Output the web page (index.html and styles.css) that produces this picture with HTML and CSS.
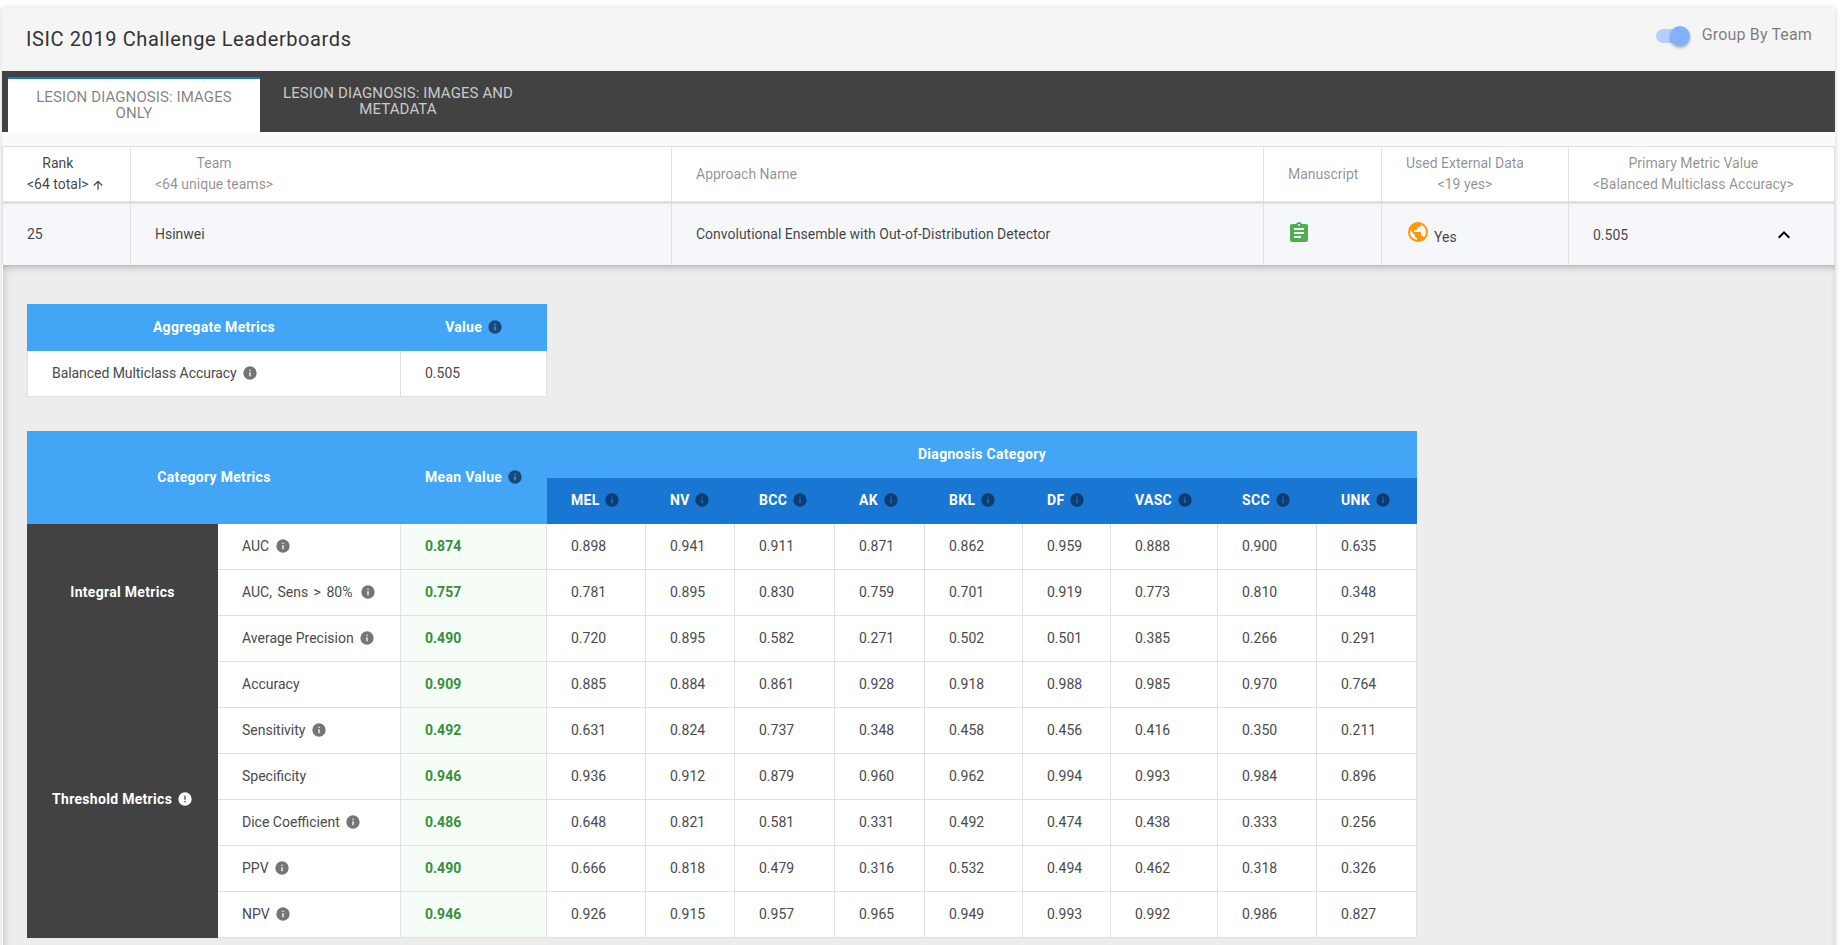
FILE: index.html
```html
<!DOCTYPE html>
<html lang="en">
<head>
<meta charset="utf-8">
<title>ISIC 2019 Challenge Leaderboards</title>
<link rel="stylesheet" href="styles.css">
</head>
<body>
<svg class="defs" aria-hidden="true">
  <symbol id="i-info" viewBox="0 0 24 24"><path d="M13,9H11V7H13M13,17H11V11H13M12,2A10,10 0 0,0 2,12A10,10 0 0,0 12,22A10,10 0 0,0 22,12A10,10 0 0,0 12,2Z"/></symbol>
  <symbol id="i-alert" viewBox="0 0 24 24"><path d="M13,13H11V7H13M13,17H11V15H13M12,2A10,10 0 0,0 2,12A10,10 0 0,0 12,22A10,10 0 0,0 22,12A10,10 0 0,0 12,2Z"/></symbol>
  <symbol id="i-clip" viewBox="0 0 24 24"><path d="M17,9H7V7H17M17,13H7V11H17M14,17H7V15H14M12,3A1,1 0 0,1 13,4A1,1 0 0,1 12,5A1,1 0 0,1 11,4A1,1 0 0,1 12,3M19,3H14.82C14.4,1.84 13.3,1 12,1C10.7,1 9.6,1.84 9.18,3H5A2,2 0 0,0 3,5V19A2,2 0 0,0 5,21H19A2,2 0 0,0 21,19V5A2,2 0 0,0 19,3Z"/></symbol>
  <symbol id="i-earth" viewBox="0 0 24 24"><path d="M17.9,17.39C17.64,16.59 16.89,16 16,16H15V13A1,1 0 0,0 14,12H8V10H10A1,1 0 0,0 11,9V7H13A2,2 0 0,0 15,5V4.59C17.93,5.77 20,8.64 20,12C20,14.08 19.2,15.97 17.9,17.39M11,19.93C7.05,19.44 4,16.08 4,12C4,11.38 4.08,10.78 4.21,10.19L9,15V16A2,2 0 0,0 11,18M12,2A10,10 0 0,0 2,12A10,10 0 0,0 12,22A10,10 0 0,0 22,12A10,10 0 0,0 12,2Z"/></symbol>
  <symbol id="i-chev" viewBox="0 0 24 24"><path d="M7.41,15.41L12,10.83L16.59,15.41L18,14L12,8L6,14L7.41,15.41Z"/></symbol>
  <symbol id="i-up" viewBox="0 0 24 24"><path d="M13,20H11V8L5.5,13.5L4.08,12.08L12,4.16L19.92,12.08L18.5,13.5L13,8V20Z"/></symbol>
</svg>
<main class="card">
  <header class="titlebar">
    <h1 class="title">ISIC 2019 Challenge Leaderboards</h1>
    <div class="group-toggle">
      <span class="switch"><span class="switch-thumb"></span></span>
      <span class="switch-label">Group By Team</span>
    </div>
  </header>
  <nav class="tabs">
    <div class="tab tab-active">Lesion Diagnosis: Images Only</div>
    <div class="tab tab-other">Lesion Diagnosis: Images and Metadata</div>
  </nav>
  <section class="board">
    <table class="lead">
      <colgroup><col class="l1"><col class="l2"><col class="l3"><col class="l4"><col class="l5"><col class="l6"></colgroup>
      <thead>
        <tr>
          <th><span class="hblock dark">Rank<br>&lt;64 total&gt;<svg class="i-arrow"><use href="#i-up"/></svg></span></th>
          <th><span class="hblock">Team<br>&lt;64 unique teams&gt;</span></th>
          <th><span class="hblock">Approach Name</span></th>
          <th><span class="hblock">Manuscript</span></th>
          <th><span class="hblock">Used External Data<br>&lt;19 yes&gt;</span></th>
          <th><span class="hblock">Primary Metric Value<br>&lt;Balanced Multiclass Accuracy&gt;</span></th>
        </tr>
      </thead>
      <tbody>
        <tr>
          <td class="t">25</td>
          <td class="t">Hsinwei</td>
          <td class="t">Convolutional Ensemble with Out-of-Distribution Detector</td>
          <td><svg class="i-manu"><use href="#i-clip"/></svg></td>
          <td><span class="ext"><svg class="i-globe"><use href="#i-earth"/></svg><span class="ext-text">Yes</span></span></td>
          <td><span class="primary"><span>0.505</span><svg class="i-chevron"><use href="#i-chev"/></svg></span></td>
        </tr>
      </tbody>
    </table>
    <div class="details">
      <table class="metrics aggregate">
        <colgroup><col class="c-name"><col class="c-mean"></colgroup>
        <thead>
          <tr class="h47">
            <th>Aggregate Metrics</th>
            <th>Value <svg class="i-s dk"><use href="#i-info"/></svg></th>
          </tr>
        </thead>
        <tbody>
          <tr>
            <td class="tight">Balanced Multiclass Accuracy <svg class="i-s gr"><use href="#i-info"/></svg></td>
            <td>0.505</td>
          </tr>
        </tbody>
      </table>
      <table class="metrics category">
        <colgroup>
          <col class="c-group"><col class="c-metric"><col class="c-mean">
          <col class="c-mel"><col class="c-nv"><col class="c-bcc"><col class="c-ak"><col class="c-bkl"><col class="c-df"><col class="c-vasc"><col class="c-scc"><col class="c-unk">
        </colgroup>
        <thead>
          <tr class="h47">
            <th colspan="2" rowspan="2">Category Metrics</th>
            <th rowspan="2">Mean Value <svg class="i-s dk"><use href="#i-info"/></svg></th>
            <th colspan="9">Diagnosis Category</th>
          </tr>
          <tr class="sub">
            <th>MEL <svg class="i-s dk2"><use href="#i-info"/></svg></th>
            <th>NV <svg class="i-s dk2"><use href="#i-info"/></svg></th>
            <th>BCC <svg class="i-s dk2"><use href="#i-info"/></svg></th>
            <th>AK <svg class="i-s dk2"><use href="#i-info"/></svg></th>
            <th>BKL <svg class="i-s dk2"><use href="#i-info"/></svg></th>
            <th>DF <svg class="i-s dk2"><use href="#i-info"/></svg></th>
            <th>VASC <svg class="i-s dk2"><use href="#i-info"/></svg></th>
            <th>SCC <svg class="i-s dk2"><use href="#i-info"/></svg></th>
            <th>UNK <svg class="i-s dk2"><use href="#i-info"/></svg></th>
          </tr>
        </thead>
        <tbody>
          <tr><td class="group" rowspan="3">Integral Metrics</td><td>AUC <svg class="i-s gr"><use href="#i-info"/></svg></td><td class="mean">0.874</td><td>0.898</td><td>0.941</td><td>0.911</td><td>0.871</td><td>0.862</td><td>0.959</td><td>0.888</td><td>0.900</td><td>0.635</td></tr>
          <tr><td class="wide-words">AUC, Sens &gt; 80% <svg class="i-s gr"><use href="#i-info"/></svg></td><td class="mean">0.757</td><td>0.781</td><td>0.895</td><td>0.830</td><td>0.759</td><td>0.701</td><td>0.919</td><td>0.773</td><td>0.810</td><td>0.348</td></tr>
          <tr><td>Average Precision <svg class="i-s gr"><use href="#i-info"/></svg></td><td class="mean">0.490</td><td>0.720</td><td>0.895</td><td>0.582</td><td>0.271</td><td>0.502</td><td>0.501</td><td>0.385</td><td>0.266</td><td>0.291</td></tr>
          <tr><td class="group" rowspan="6">Threshold Metrics <svg class="i-s wh"><use href="#i-alert"/></svg></td><td>Accuracy</td><td class="mean">0.909</td><td>0.885</td><td>0.884</td><td>0.861</td><td>0.928</td><td>0.918</td><td>0.988</td><td>0.985</td><td>0.970</td><td>0.764</td></tr>
          <tr><td>Sensitivity <svg class="i-s gr"><use href="#i-info"/></svg></td><td class="mean">0.492</td><td>0.631</td><td>0.824</td><td>0.737</td><td>0.348</td><td>0.458</td><td>0.456</td><td>0.416</td><td>0.350</td><td>0.211</td></tr>
          <tr><td>Specificity</td><td class="mean">0.946</td><td>0.936</td><td>0.912</td><td>0.879</td><td>0.960</td><td>0.962</td><td>0.994</td><td>0.993</td><td>0.984</td><td>0.896</td></tr>
          <tr><td>Dice Coefficient <svg class="i-s gr"><use href="#i-info"/></svg></td><td class="mean">0.486</td><td>0.648</td><td>0.821</td><td>0.581</td><td>0.331</td><td>0.492</td><td>0.474</td><td>0.438</td><td>0.333</td><td>0.256</td></tr>
          <tr><td>PPV <svg class="i-s gr"><use href="#i-info"/></svg></td><td class="mean">0.490</td><td>0.666</td><td>0.818</td><td>0.479</td><td>0.316</td><td>0.532</td><td>0.494</td><td>0.462</td><td>0.318</td><td>0.326</td></tr>
          <tr><td>NPV <svg class="i-s gr"><use href="#i-info"/></svg></td><td class="mean">0.946</td><td>0.926</td><td>0.915</td><td>0.957</td><td>0.965</td><td>0.949</td><td>0.993</td><td>0.992</td><td>0.986</td><td>0.827</td></tr>
        </tbody>
      </table>
    </div>
  </section>
</main>
</body>
</html>
```

FILE: styles.css
```css
* { box-sizing: border-box; }
html, body { margin: 0; height: 945px; overflow: hidden; background: #fff; }
body { font-family: Roboto, "Liberation Sans", sans-serif; color: rgba(0,0,0,.87); padding: 7px 6px 0 2px; }
.defs { display: none; }
svg { fill: currentColor; }

.card { background: #fafafa; box-shadow: 0 1px 5px rgba(0,0,0,.2); }

.titlebar { height: 64px; background: #f5f5f5; display: flex; justify-content: space-between; padding: 0 24px; }
.title { margin: 0; font-size: 20px; font-weight: 400; line-height: 64px; letter-spacing: .6px; color: #333; }
.group-toggle { display: flex; align-items: center; height: 55px; margin-right: -1px; }
.switch { display: block; width: 34px; height: 14px; border-radius: 7px; background: #b4ceff; position: relative; margin-right: 12px; margin-top: 2px; }
.switch-thumb { position: absolute; right: 0; top: -3px; width: 20px; height: 20px; border-radius: 50%; background: #82b1ff; box-shadow: 0 2px 3px rgba(0,0,0,.3); }
.switch-label { font-size: 16px; letter-spacing: .15px; color: rgba(0,0,0,.5); }

.tabs { display: flex; height: 61px; background: #424242; padding-left: 6px; align-items: flex-end; }
.tab { font-size: 15px; letter-spacing: .1px; line-height: 16px; text-transform: uppercase; text-align: center; display: flex; align-items: center; justify-content: center; }
.tab-active { width: 252px; height: 55px; padding: 0 24px 2px; background: #fff; border-top: 2px solid #1976d2; color: rgba(0,0,0,.5); }
.tab-other { width: 276px; height: 61px; padding: 0 8px 2px; color: rgba(255,255,255,.72); }

.board { padding-top: 14px; }

.lead { width: 100%; border-collapse: separate; border-spacing: 0; table-layout: fixed; background: #fff; border: 1px solid #e0e0e0; border-width: 1px 1px 0 1px; position: relative; }
.l1 { width: 128px; } .l2 { width: 541px; } .l3 { width: 592px; } .l4 { width: 118px; } .l5 { width: 187px; } .l6 { width: auto; }
.lead th { height: 57px; padding: 0 24px; border-right: 1px solid #e0e0e0; border-bottom: 3px solid #e0e0e0; font-size: 14px; font-weight: 400; line-height: 21px; text-align: left; color: rgba(0,0,0,.45); }
.lead th:last-child, .lead td:last-child { border-right: 0; }
.hblock { display: inline-block; text-align: center; vertical-align: middle; white-space: nowrap; }
.hblock.dark { color: rgba(0,0,0,.75); }
.i-arrow { width: 14px; height: 14px; vertical-align: -3px; margin: 0 -16px 0 2px; }
.lead td { height: 61px; padding: 0 24px; border-right: 1px solid #e0e0e0; background: #f5f7fa; font-size: 14px; color: rgba(0,0,0,.75); }
.lead td.t { padding-bottom: 2px; }
.i-manu { width: 24px; height: 24px; color: #4caf50; display: block; margin: -3px 0 0 -1px; }
.ext { display: inline-flex; align-items: flex-end; }
.i-globe { width: 24px; height: 24px; color: #ff9800; margin-right: 4px; margin-top: -3px; }
.ext-text { line-height: 16px; margin-bottom: -1px; }
.primary { display: flex; justify-content: space-between; align-items: center; }
.i-chevron { width: 24px; height: 24px; color: #000; margin-right: 14px; }

.details { height: 700px; background: #ededed; padding: 39px 0 0 24px; box-shadow: inset 0 5px 8px -5px rgba(50,50,50,.5), inset 12px 0 12px -12px rgba(50,50,50,.15); border-left: 1px solid #fff; }

.metrics { border-collapse: separate; border-spacing: 0; table-layout: fixed; background: #fff; font-size: 14px; }
.aggregate { width: 520px; margin-bottom: 34px; }
.category { width: 1390px; }
.c-name { width: 374px; } .c-group { width: 191px; } .c-metric { width: 183px; } .c-mean { width: 146px; }
.c-mel { width: 99px; } .c-nv { width: 89px; } .c-bcc { width: 100px; } .c-ak { width: 90px; } .c-bkl { width: 98px; }
.c-df { width: 88px; } .c-vasc { width: 107px; } .c-scc { width: 99px; } .c-unk { width: 100px; }
.metrics th { background: #42a5f5; color: #fff; font-size: 14px; letter-spacing: .3px; font-weight: 700; text-align: center; height: 46px; padding: 0 0 2px; white-space: nowrap; }
.metrics .h47 th { height: 47px; }
.metrics .sub th { background: #1976d2; text-align: left; padding-left: 24px; }
.metrics td { height: 46px; padding: 0 0 2px 24px; border-right: 1px solid #e0e0e0; border-bottom: 1px solid #e0e0e0; color: #4a4a4a; white-space: nowrap; }
.aggregate tr td:first-child { border-left: 1px solid #e0e0e0; }
.metrics .group { background: #424242; color: #fff; font-size: 14px; letter-spacing: .3px; font-weight: 700; padding: 0 0 2px; text-align: center; border: 0; }
.metrics .mean { background: #f5fdf6; color: #388e3c; font-weight: 700; }
.metrics .tight { letter-spacing: -.06px; }
.metrics .wide-words { word-spacing: 2px; }
.i-s { width: 16px; height: 16px; vertical-align: -3px; margin-left: 1px; }
.dk { color: #1b4a7a; }
.dk2 { color: #0d3c71; }
.gr { color: #757575; margin-left: 2px; }
.wh { color: #fff; }
```
